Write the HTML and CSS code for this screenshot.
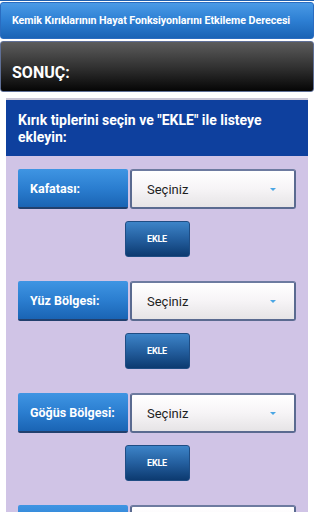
FILE: index.html
```html
<!DOCTYPE html>
<html lang="tr">
<head>
<meta charset="utf-8">
<title>Kemik Kırıkları</title>
<link rel="stylesheet" href="styles.css">
</head>
<body>
<div class="page">
  <div class="title-bar">Kemik Kırıklarının Hayat Fonksiyonlarını Etkileme Derecesi</div>
  <div class="result-bar">SONUÇ:</div>
  <div class="panel">
    <div class="panel-head">Kırık tiplerini seçin ve "EKLE" ile listeye ekleyin:</div>
    <div class="panel-body">
      <div class="group">
        <div class="row">
          <div class="label">Kafatası:</div>
          <div class="select"><span>Seçiniz</span><i class="arrow"></i></div>
        </div>
        <div class="btn">EKLE</div>
      </div>
      <div class="group">
        <div class="row">
          <div class="label">Yüz Bölgesi:</div>
          <div class="select"><span>Seçiniz</span><i class="arrow"></i></div>
        </div>
        <div class="btn">EKLE</div>
      </div>
      <div class="group">
        <div class="row">
          <div class="label">Göğüs Bölgesi:</div>
          <div class="select"><span>Seçiniz</span><i class="arrow"></i></div>
        </div>
        <div class="btn">EKLE</div>
      </div>
      <div class="group">
        <div class="row">
          <div class="label"></div>
          <div class="select"></div>
        </div>
      </div>
    </div>
  </div>
</div>
</body>
</html>
```
FILE: styles.css
```css
html, body {
  margin: 0;
  padding: 0;
  background: #ffffff;
  font-family: Roboto, "Liberation Sans", Arial, sans-serif;
  overflow: hidden;
}
.page {
  width: 314px;
  height: 512px;
  overflow: hidden;
  display: flex;
  flex-direction: column;
  border-top: 1px solid #1f5fae;
  box-sizing: border-box;
}
.title-bar {
  flex: none;
  margin-top: 1px;
  height: 37px;
  box-sizing: border-box;
  border: 1px solid #2a6cc0;
  border-radius: 3px;
  background: linear-gradient(to bottom, #4a9ae6 0%, #2d7fd3 50%, #1a63b5 100%);
  color: #ffffff;
  font-weight: bold;
  font-size: 10.7px;
  letter-spacing: -0.05px;
  display: flex;
  align-items: center;
  padding-left: 11px;
  white-space: nowrap;
}
.result-bar {
  flex: none;
  margin-top: 2px;
  height: 51px;
  box-sizing: border-box;
  border: 1px solid #5f6f96;
  border-radius: 3px;
  background: linear-gradient(to bottom, #5c5c5c 0%, #2e2e2e 55%, #050505 100%);
  color: #ffffff;
  font-weight: bold;
  font-size: 16px;
  display: flex;
  align-items: center;
  padding: 12px 0 0 11px;
}
.panel {
  flex: none;
  margin: 6px 6px 0 6px;
  border-top: 2px solid #c9c6d6;
  display: flex;
  flex-direction: column;
}
.panel-head {
  flex: none;
  background: #0e409e;
  color: #ffffff;
  font-weight: bold;
  font-size: 14px;
  line-height: 17px;
  padding: 12px 40px 10px 12px;
  height: 56px;
  box-sizing: border-box;
}
.panel-body {
  flex: none;
  background: #d0c4e6;
  padding: 13px 12px 20px 12px;
  display: flex;
  flex-direction: column;
  gap: 24px;
}
.group {
  display: flex;
  flex-direction: column;
  align-items: center;
  gap: 12px;
}
.row {
  display: flex;
  gap: 2px;
  width: 100%;
  height: 40px;
}
.label {
  width: 110px;
  flex: none;
  box-sizing: border-box;
  background: linear-gradient(to bottom, #3f95e3 0%, #2b7ed0 50%, #1a64b4 100%);
  border-bottom: 2px solid #22406e;
  border-radius: 2px;
  color: #ffffff;
  font-weight: bold;
  font-size: 12.5px;
  display: flex;
  align-items: center;
  padding-left: 12px;
  white-space: nowrap;
}
.select {
  flex: 1;
  box-sizing: border-box;
  border: 2px solid #5a6a90;
  border-top-color: #6d7ba0;
  border-radius: 3px;
  background: linear-gradient(to bottom, #ffffff 0%, #f6f4f6 50%, #e6e4e6 100%);
  color: #1e1e1e;
  font-size: 13px;
  display: flex;
  align-items: center;
  padding-left: 15px;
}
.select span {
  flex: 1;
}
.arrow {
  width: 0;
  height: 0;
  border-left: 3.5px solid transparent;
  border-right: 3.5px solid transparent;
  border-top: 3.5px solid #4aa6e4;
  margin-right: 18px;
}
.btn {
  width: 65px;
  height: 36px;
  box-sizing: border-box;
  border: 1px solid #1f4d84;
  border-radius: 3px;
  background: linear-gradient(to bottom, #3d84c8 0%, #245f9f 50%, #0c3a70 100%);
  color: #ffffff;
  font-weight: bold;
  font-size: 9px;
  display: flex;
  align-items: center;
  justify-content: center;
  letter-spacing: -0.2px;
}
```
